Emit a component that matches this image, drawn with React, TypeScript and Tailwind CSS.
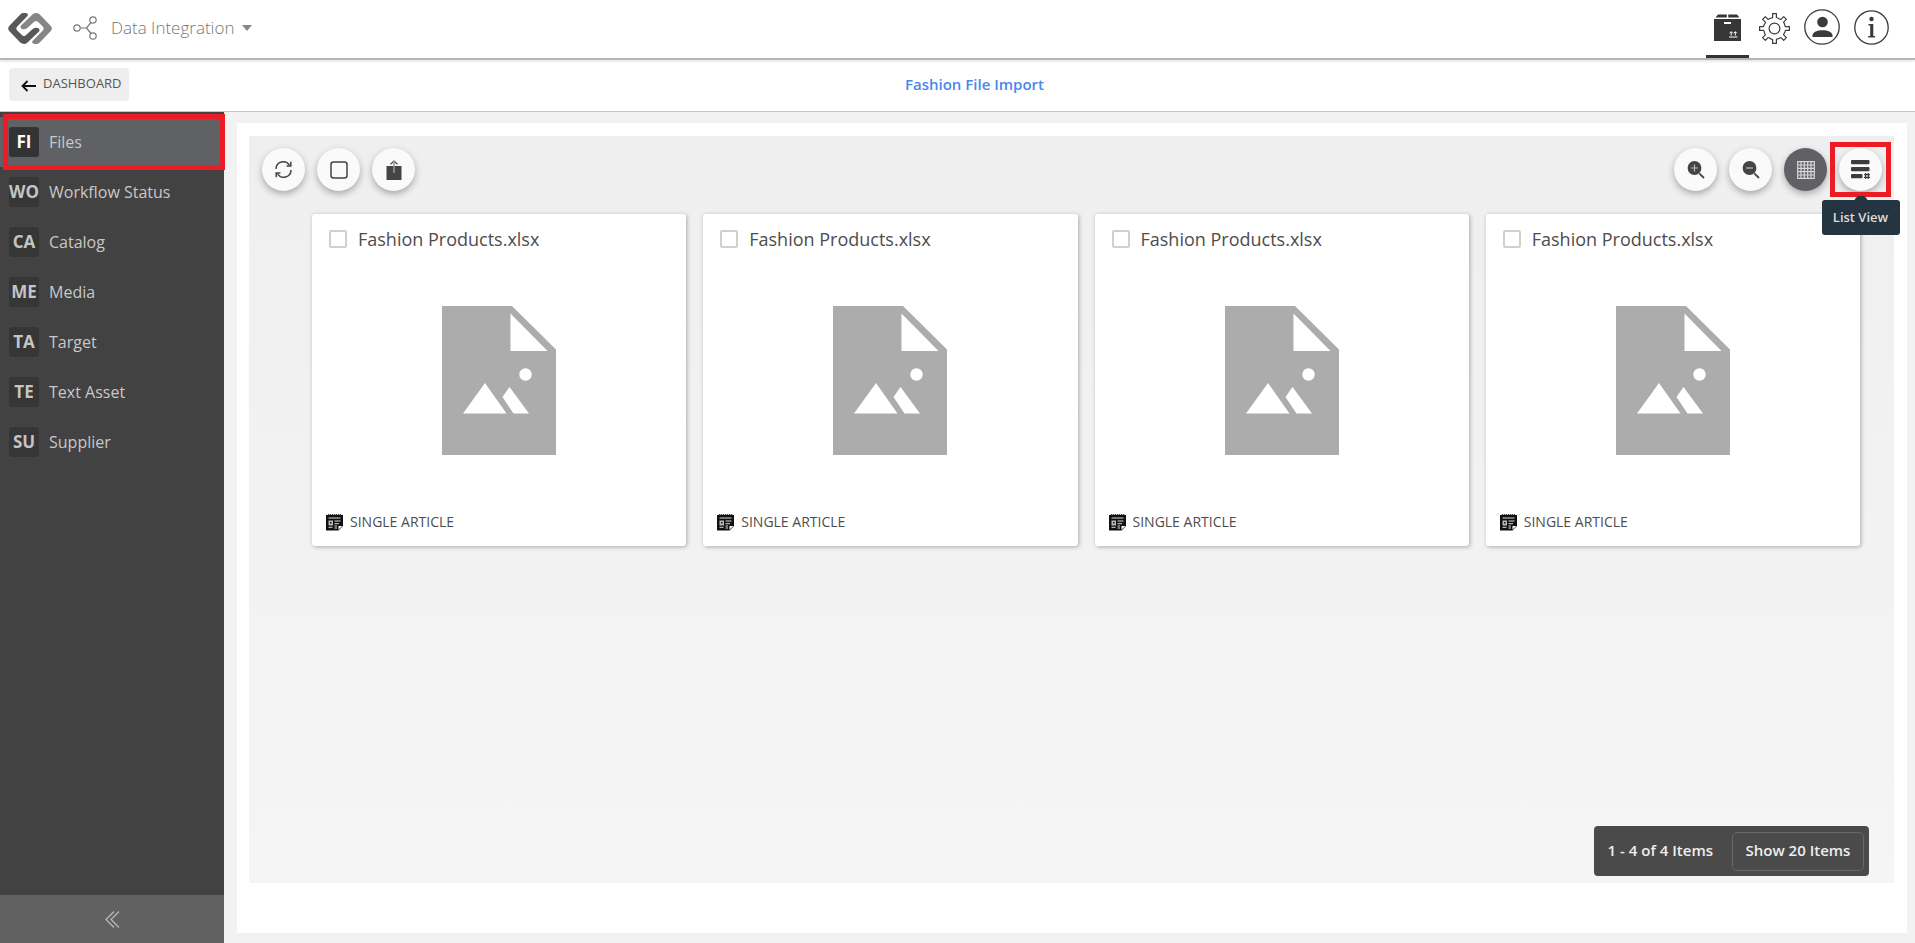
import type { ReactNode } from "react";

const navItems = [
  { code: "FI", label: "Files", active: true },
  { code: "WO", label: "Workflow Status" },
  { code: "CA", label: "Catalog" },
  { code: "ME", label: "Media" },
  { code: "TA", label: "Target" },
  { code: "TE", label: "Text Asset" },
  { code: "SU", label: "Supplier" },
];

const files = [1, 2, 3, 4].map((id) => ({
  id,
  name: "Fashion Products.xlsx",
  kind: "SINGLE ARTICLE",
}));

function Logo() {
  const half =
    "M12.500 1.200Q13.700 0 15.500 0H17.500Q21 .5 19.500 3L9 13.700Q7.700 15.500 9 17.300L14.500 22.500Q16 23.700 17.500 22.500L25 15.700Q27.500 14 30 15Q32.500 16.500 31 18.500L19 30Q16 32 12.500 29.800L1.200 18Q-.8 15.500 1.200 13Z";
  return (
    <svg width="44" height="31" viewBox="0 0 44 31" aria-hidden="true">
      <path d={half} fill="#585856" />
      <path d={half} fill="#868686" transform="rotate(180 22 15.500)" />
    </svg>
  );
}

function FlowIcon() {
  return (
    <svg width="24" height="24" viewBox="0 0 24 24" fill="none" stroke="#777" strokeWidth="1.2" aria-hidden="true">
      <circle cx="4" cy="12" r="3.200" />
      <circle cx="20" cy="4" r="3.200" />
      <circle cx="20" cy="20" r="3.200" />
      <path d="M7.200 12H13.500L18 6.500M13.500 12L18 17.500" />
    </svg>
  );
}

function BoxIcon() {
  return (
    <svg width="27" height="27" viewBox="0 0 27 27" aria-hidden="true">
      <path d="M4 .5H12.800V3.500H1.500ZM14.200.5H23L25.500 3.500H14.200ZM0 5H27V27H0Z" fill="#363636" />
      <path d="M10 8H17V10H10ZM15 22.500H23.500V23.500H15Z" fill="#fff" />
      <path d="M17.200 21.500V18M15.700 19.200L17.200 17.600L18.700 19.200M21.300 21.500V18M19.800 19.200L21.300 17.600L22.800 19.200" stroke="#fff" fill="none" />
    </svg>
  );
}

function GearIcon() {
  return (
    <svg width="31" height="31" viewBox="-15.500 -15.500 31 31" fill="none" stroke="#3b3b3b" strokeWidth="1.200" strokeLinejoin="round" aria-hidden="true">
      <circle r="5.400" />
      {[0, 45, 90, 135, 180, 225, 270, 315].map((a) => (
        <path key={a} transform={`rotate(${a})`} d="M-2.800-10.300L-1.900-11V-14.900H1.900V-11Q3.800-10.600 5.300-9.260" />
      ))}
    </svg>
  );
}

function UserIcon() {
  return (
    <svg width="36" height="36" viewBox="0 0 36 36" aria-hidden="true">
      <circle cx="18" cy="18" r="17.200" fill="none" stroke="#3b3b3b" strokeWidth="1.300" />
      <circle cx="18.500" cy="13" r="5.300" fill="#3b3b3b" />
      <path d="M8.500 28V26.500C8.500 19.500 28.500 19.500 28.500 26.500V28Z" fill="#3b3b3b" />
    </svg>
  );
}

function InfoIcon() {
  return (
    <svg width="35" height="35" viewBox="0 0 35 35" aria-hidden="true">
      <circle cx="17.500" cy="17.500" r="16.700" fill="none" stroke="#3b3b3b" strokeWidth="1.300" />
      <circle cx="17.500" cy="9" r="2.200" fill="#3b3b3b" />
      <path d="M14.500 14H19.300V26H21V27.500H14.200V26H16.200V15.500H14.500Z" fill="#3b3b3b" />
    </svg>
  );
}

function RefreshIcon() {
  return (
    <svg width="17" height="17" viewBox="0 0 17 17" fill="none" stroke="#444" strokeWidth="1.500" aria-hidden="true">
      <path d="M1 8A7.200 7.200 0 0 1 14.500 4.500M16 9A7.200 7.200 0 0 1 2.500 12.500" />
      <path d="M15.800.8V5H11.600M1.200 16.200V12H5.400" />
    </svg>
  );
}

function ShareIcon() {
  return (
    <svg width="16" height="20" viewBox="0 0 16 20" fill="none" aria-hidden="true">
      <path d="M.5 6H15.500V20H.5Z" fill="#444" />
      <path d="M4.500 4.200L8 1L11.500 4.200" stroke="#444" strokeWidth="1.200" />
      <path d="M8 1V13" stroke="#999" strokeWidth="1.500" />
    </svg>
  );
}

function ZoomIcon({ plus }: { plus?: boolean }) {
  return (
    <svg width="18" height="18" viewBox="0 0 18 18" fill="none" aria-hidden="true">
      <circle cx="7.500" cy="7" r="6.900" fill="#444" />
      <path d="M12.300 12.300L17 17" stroke="#444" strokeWidth="1.800" />
      <path d={plus ? "M4 7H11M7.500 3.500V10.500" : "M4 7H11"} stroke="#bbb" strokeWidth="1.200" />
    </svg>
  );
}

function GridIcon() {
  return (
    <svg width="18" height="18" viewBox="0 0 18 18" aria-hidden="true">
      <path d="M.7.700H17.300V17.300H.7ZM4 .7V17.300M7.300.7V17.300M10.700.7V17.300M14 .7V17.300M.7 4H17.300M.7 7.300H17.300M.7 10.700H17.300M.7 14H17.300" fill="none" stroke="#d8d8d8" strokeWidth="1.200" />
    </svg>
  );
}

function ListIcon() {
  return (
    <svg width="19" height="19" viewBox="0 0 19 19" aria-hidden="true">
      <rect width="18.500" height="4.200" rx="1" fill="#3c3c3c" />
      <rect y="7" width="18.500" height="4.200" rx="1" fill="#3c3c3c" />
      <rect y="14" width="11.500" height="4.200" rx="1" fill="#3c3c3c" />
      <path d="M14.700 13V19M17.300 13V19M13 14.700H19M13 17.300H19" stroke="#3c3c3c" strokeWidth="1.200" />
    </svg>
  );
}

function FilePicture() {
  return (
    <svg width="114" height="149" viewBox="0 0 114 149" role="img" aria-label="File preview">
      <path d="M0 0H70L114 43.500V149H0Z" fill="#acacac" />
      <path d="M68.500 7.500V45H105.500ZM21 107.500L43 77L64.500 107.500ZM60.500 91L67.500 81L87 107.500H71.500Z" fill="#fff" />
      <circle cx="83.500" cy="68.500" r="6.200" fill="#fff" />
    </svg>
  );
}

function ArticleIcon() {
  return (
    <svg width="17" height="17" viewBox="0 0 17 17" aria-hidden="true">
      <path d="M0 1H1.500L2.500 0L3.500 1L4.500 0L5.500 1L6.500 0L7.500 1L8.500 0L9.500 1L10.500 0L11.500 1L12.500 0L13.500 1L14.500 0L15.500 1H17V12L12.500 16.500H0Z" fill="#111" />
      <path d="M2.500 4H14.500M2.500 13.300H6.500M8.500 7H14.500M8.500 9.700H13M8.500 12H11M8.500 14H11" stroke="#ddd" strokeWidth="1" />
      <path d="M2.500 6.500H7V11.500H2.500Z" fill="#bbb" />
      <path d="M4 8H5.500V9.500H4Z" fill="#111" />
      <path d="M12.500 15.800V12H16.300Z" fill="#fff" />
    </svg>
  );
}

function RoundButton({ label, dark, children }: { label: string; dark?: boolean; children: ReactNode }) {
  return (
    <button
      type="button"
      aria-label={label}
      className={`flex size-[43px] items-center justify-center rounded-full shadow-[0_3px_7px_rgba(0,0,0,0.3)] ${dark ? "bg-[#606165]" : "bg-[#fafafa]"}`}
    >
      {children}
    </button>
  );
}

export default function App() {
  return (
    <div className="flex min-h-screen flex-col bg-[#f2f2f2] font-['Open_Sans',sans-serif] text-[#4d4d4d]">
      <header className="relative flex h-[60px] items-center justify-between border-b-2 border-[#b5b5b5] bg-white pr-[26px] pl-2 shadow-[0_1px_3px_rgba(0,0,0,0.15)]">
        <div className="flex items-center pb-0.5">
          <a href="#home" aria-label="Home">
            <Logo />
          </a>
          <button type="button" className="ml-[21px] flex items-center font-['Open_Sans',sans-serif] text-[17px] font-light text-[#777]">
            <FlowIcon />
            <span className="ml-[14px]">Data Integration</span>
            <svg className="ml-2" width="10" height="6" viewBox="0 0 10 6" aria-hidden="true">
              <path d="M0 0H10L5 6Z" fill="#888" />
            </svg>
          </button>
        </div>
        <nav aria-label="Tools" className="flex h-full items-center gap-[10px]">
          <button type="button" aria-label="Products" className="flex h-full w-[43px] items-center justify-center border-b-[3px] border-[#333]">
            <BoxIcon />
          </button>
          <div className="flex items-center gap-[14px] pb-1">
            <button type="button" aria-label="Settings" className="pt-0.5"><GearIcon /></button>
            <button type="button" aria-label="Account"><UserIcon /></button>
            <button type="button" aria-label="Information"><InfoIcon /></button>
          </div>
        </nav>
      </header>

      <div className="grid h-[52px] grid-cols-[1fr_auto_1fr] items-center border-b border-[#c4c4c4] bg-white px-[9px] pb-0.5">
        <a href="#dashboard" className="flex h-[33px] w-[120px] items-center gap-[7px] rounded bg-[#eee] pb-0.5 pl-3 text-[13px] text-[#555]">
          <svg className="mt-1" width="15" height="12" viewBox="0 0 15 12" fill="none" stroke="#111" strokeWidth="1.800" aria-hidden="true">
            <path d="M15 6H1.500M6.500 1L1.500 6L6.500 11" />
          </svg>
          DASHBOARD
        </a>
        <h1 className="pl-[34px] text-[15px] font-semibold text-[#4a86ee]">Fashion File Import</h1>
      </div>

      <div className="flex grow">
        <aside className="flex w-[224px] shrink-0 flex-col bg-[#424242]">
          <nav aria-label="Sections" className="pt-[5px]">
            {navItems.map((item) => (
              <a
                key={item.code}
                href={`#${item.code}`}
                className={`relative flex h-[50px] items-center gap-[10px] pl-[9px] ${item.active ? "bg-[#606165]" : ""}`}
              >
                <span className={`flex size-[30px] items-center justify-center rounded-[3px] text-[17px] font-bold ${item.active ? "bg-[#333] text-white" : "bg-[#363636] text-[#c4c4c4]"}`}>
                  {item.code}
                </span>
                <span className="text-base text-[#c8c8c8]">{item.label}</span>
                {item.active && <span className="absolute -top-[3px] -right-px -bottom-[3px] left-[3px] border-[5px] border-[#ed1c24]" />}
              </a>
            ))}
          </nav>
          <button type="button" aria-label="Collapse sidebar" className="mt-auto flex h-12 items-center justify-center bg-[#616161]">
            <svg width="15" height="17" viewBox="0 0 15 17" fill="none" stroke="#bbb" strokeWidth="1.200" aria-hidden="true">
              <path d="M9 .5L1 8.500L9 16.500M14 .5L6 8.500L14 16.500" />
            </svg>
          </button>
        </aside>

        <main className="flex grow flex-col pt-[11px] pr-2 pb-[10px] pl-[13px]">
          <div className="flex grow flex-col bg-white pt-[13px] pr-[13px] pb-[50px] pl-3">
            <section className="flex grow flex-col bg-linear-to-b from-[#efefef] to-[#f5f5f5]">
              <div className="flex justify-between py-3 pr-3 pl-[13px]">
                <div className="flex gap-3">
                  <RoundButton label="Refresh"><RefreshIcon /></RoundButton>
                  <RoundButton label="Select all">
                    <svg width="18" height="18" viewBox="0 0 18 18" aria-hidden="true">
                      <rect x="1" y="1" width="16" height="16" rx="2.500" fill="none" stroke="#444" strokeWidth="1.500" />
                    </svg>
                  </RoundButton>
                  <RoundButton label="Export"><ShareIcon /></RoundButton>
                </div>
                <div className="flex gap-3">
                  <RoundButton label="Zoom in"><ZoomIcon plus /></RoundButton>
                  <RoundButton label="Zoom out"><ZoomIcon /></RoundButton>
                  <RoundButton label="Grid view" dark><GridIcon /></RoundButton>
                  <div className="relative z-10">
                    <RoundButton label="List view"><ListIcon /></RoundButton>
                    <span className="absolute -inset-x-[9px] -top-[6px] -bottom-[6px] border-[5px] border-[#ed1c24]" />
                    <div role="tooltip" className="absolute top-[52px] left-1/2 flex h-[35px] w-[78px] -translate-x-1/2 items-center justify-center rounded-[3px] bg-[#243441] text-[13px] font-semibold whitespace-nowrap text-[#ddd]">
                      <svg className="absolute -top-1 left-8" width="14" height="5" viewBox="0 0 14 5" aria-hidden="true">
                        <path d="M0 5Q1 2 4 0H10Q13 2 14 5Z" fill="#243441" />
                      </svg>
                      List View
                    </div>
                  </div>
                </div>
              </div>

              <div className="grid grid-cols-4 gap-[17px] pt-[11px] pr-[34px] pl-[63px]">
                {files.map((file) => (
                  <article key={file.id} className="flex h-[332px] flex-col justify-between rounded-[3px] bg-white shadow-[1px_1px_4px_rgba(0,0,0,0.3)]">
                    <label className="flex items-center gap-[11px] pt-[13px] pl-[17px] text-lg leading-6">
                      <input type="checkbox" className="size-[18px] appearance-none rounded-[2px] border-2 border-[#d0d0d0] bg-white" />
                      {file.name}
                    </label>
                    <div className="flex justify-center pb-0.5">
                      <FilePicture />
                    </div>
                    <div className="flex items-center gap-[7px] pb-[14px] pl-[14px] text-sm">
                      <ArticleIcon />
                      {file.kind}
                    </div>
                  </article>
                ))}
              </div>

              <div className="mt-auto mr-[25px] mb-[7px] flex h-[50px] items-center gap-[19px] self-end rounded bg-[#4a4a4a] pr-[5px] pl-[14px] text-[15px] font-semibold text-[#eee]">
                <span className="pb-0.5">1 - 4 of 4 Items</span>
                <button type="button" className="h-[39px] w-[132px] rounded-[5px] border border-[#686868] pb-0.5">
                  Show 20 Items
                </button>
              </div>
            </section>
          </div>
        </main>
      </div>
    </div>
  );
}
